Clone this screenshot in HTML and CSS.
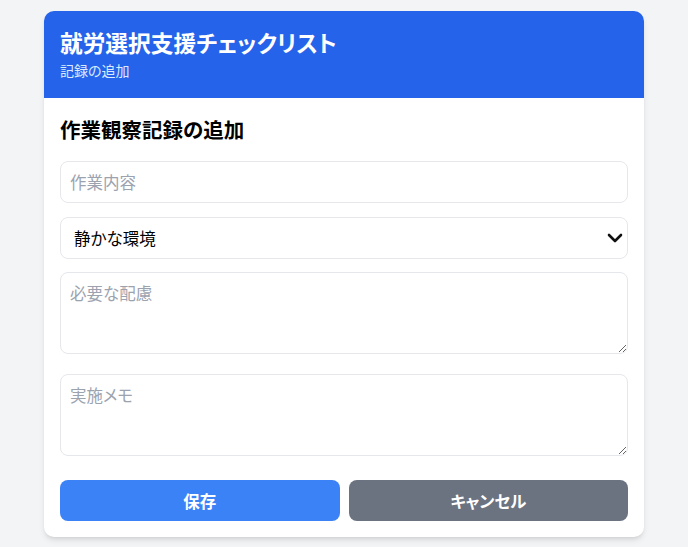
FILE: index.html
```html
<!DOCTYPE html>
<html lang="ja">
<head>
<meta charset="utf-8">
<title>就労選択支援チェックリスト</title>
<link rel="stylesheet" href="styles.css">
</head>
<body>
<div class="page">
  <div class="card">
    <div class="header">
      <h1 class="title">就労選択支援チェックリスト</h1>
      <p class="subtitle">記録の追加</p>
    </div>
    <div class="body">
      <h2 class="section-title">作業観察記録の追加</h2>
      <input class="field field-input" type="text" placeholder="作業内容">
      <div class="select-wrap">
        <select class="field field-select">
          <option>静かな環境</option>
        </select>
        <svg class="chevron" width="16" height="10" viewBox="0 0 16 10" aria-hidden="true">
          <path d="M2 2 L8 8 L14 2" fill="none" stroke="#111" stroke-width="2.6" stroke-linecap="round" stroke-linejoin="round"/>
        </svg>
      </div>
      <textarea class="field field-area field-area-1" placeholder="必要な配慮"></textarea>
      <textarea class="field field-area field-area-2" placeholder="実施メモ"></textarea>
      <div class="actions">
        <button class="btn btn-save">保存</button>
        <button class="btn btn-cancel">キャンセル</button>
      </div>
    </div>
  </div>
</div>
</body>
</html>
```
FILE: styles.css
```css
* { box-sizing: border-box; }
html, body { margin: 0; padding: 0; }
body {
  background: #f3f4f6;
  font-family: "Noto Sans CJK JP", "Noto Sans", sans-serif;
  font-feature-settings: "palt";
  color: #111827;
}
.page {
  padding: 11px 44px 10px;
}
.card {
  width: 600px;
  margin: 0 auto;
  background: #ffffff;
  border-radius: 10px;
  overflow: hidden;
  box-shadow: 0 4px 6px -1px rgba(0,0,0,0.1), 0 2px 4px -2px rgba(0,0,0,0.1);
}
.header {
  background: #2563eb;
  color: #ffffff;
  padding: 16px 16px 18px;
}
.title {
  margin: 0;
  font-size: 22.7px;
  line-height: 32px;
  font-weight: 700;
}
.subtitle {
  margin: 1px 0 0;
  font-size: 14px;
  line-height: 20px;
  color: #dbeafe;
}
.body {
  padding: 16px;
}
.section-title {
  margin: 0 0 16px;
  font-size: 20.5px;
  line-height: 31px;
  font-weight: 700;
  color: #000;
}
.field {
  display: block;
  width: 100%;
  border: 1px solid #e5e7eb;
  border-radius: 8px;
  padding: 8px 9px;
  font-family: inherit;
  font-feature-settings: "palt";
  font-size: 16.5px;
  line-height: 24px;
  color: #000;
  background: #fff;
}
.field::placeholder { color: #9ca3af; }
.field-input { height: 42px; margin-bottom: 14px; }
.select-wrap {
  position: relative;
  margin-bottom: 13px;
}
.field-select {
  height: 42px;
  appearance: none;
  -webkit-appearance: none;
  padding-left: 13px;
}
.chevron {
  position: absolute;
  right: 5px;
  top: 16px;
  pointer-events: none;
}
.field-area { height: 82px; }
.field-area-1 { margin-bottom: 20px; }
.field-area-2 { margin-bottom: 24px; }
.actions {
  display: flex;
  gap: 9px;
}
.btn {
  flex: 1;
  height: 41px;
  border: none;
  border-radius: 8px;
  color: #fff;
  font-family: inherit;
  font-feature-settings: "palt";
  font-size: 16.5px;
  font-weight: 700;
}
.btn-save { background: #3b82f6; }
.btn-cancel { background: #6b7280; }
```
